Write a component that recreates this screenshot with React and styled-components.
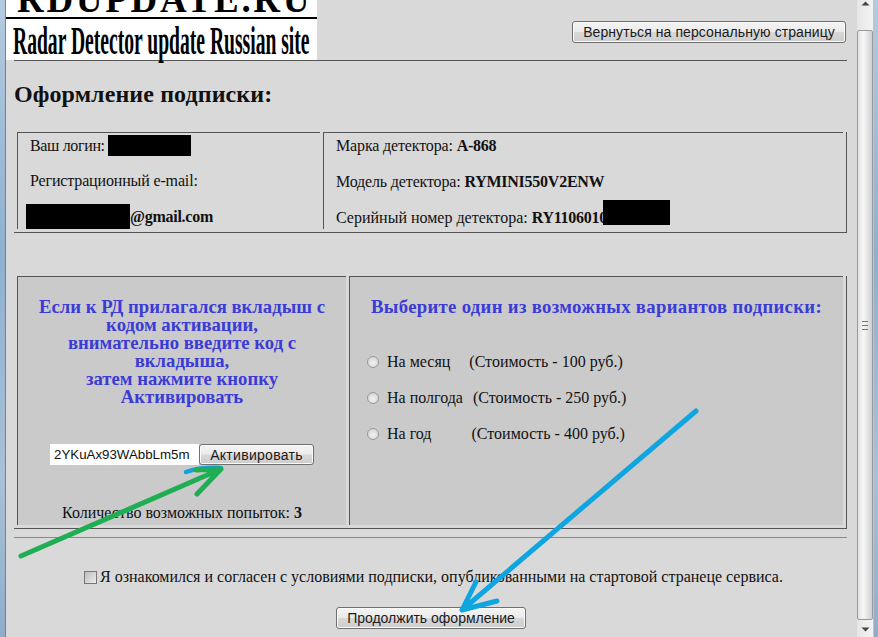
import React from "react";
import styled, { createGlobalStyle } from "styled-components";

const GlobalStyle = createGlobalStyle`
  html, body {
    margin: 0;
    padding: 0;
    overflow: hidden;
    background: #d9d9d9;
  }
`;

const plans = [
  { name: "На месяц", gap: 19, price: "(Стоимость - 100 руб.)" },
  { name: "На полгода", gap: 10, price: "(Стоимость - 250 руб.)" },
  { name: "На год", gap: 40, price: "(Стоимость - 400 руб.)" },
];

export default function App() {
  return (
    <Window>
      <GlobalStyle />
      <WinEdge />
      <Page>
        <Header>
          <Logo>
            <LogoTop>RDUPDATE.RU</LogoTop>
            <LogoBottom>Radar Detector update Russian site</LogoBottom>
          </Logo>
          <BackButton>Вернуться на персональную страницу</BackButton>
        </Header>
        <Rule />
        <Title>Оформление подписки:</Title>

        <InfoTable>
          <InfoLeft>
            <LoginRow>
              Ваш логин:
              <Redact $w={83} $h={21} />
            </LoginRow>
            <MailLabel>Регистрационный e-mail:</MailLabel>
            <MailRow>
              <Redact $w={104} $h={25} />
              <b>@gmail.com</b>
            </MailRow>
          </InfoLeft>
          <InfoRight>
            <InfoLine>
              Марка детектора: <b>A-868</b>
            </InfoLine>
            <InfoLine>
              Модель детектора: <b>RYMINI550V2ENW</b>
            </InfoLine>
            <SerialLine>
              Серийный номер детектора: <b>RY1106010</b>
              <SerialRedact />
            </SerialLine>
          </InfoRight>
        </InfoTable>

        <PanelTable>
          <CodeCell>
            <BlueText>
              Если к РД прилагался вкладыш с
              <br />
              кодом активации,
              <br />
              внимательно введите код с
              <br />
              вкладыша,
              <br />
              затем нажмите кнопку
              <br />
              Активировать
            </BlueText>
            <CodeRow>
              <CodeInput readOnly value="2YKuAx93WAbbLm5m" />
              <ActivateButton>Активировать</ActivateButton>
            </CodeRow>
            <Attempts>
              Количество возможных попыток: <b>3</b>
            </Attempts>
          </CodeCell>
          <PlanCell>
            <BlueText $spacing={0.32}>Выберите один из возможных вариантов подписки:</BlueText>
            <PlanList>
              {plans.map((p) => (
                <PlanRow key={p.name}>
                  <Radio />
                  <span>{p.name}</span>
                  <PlanPrice $gap={p.gap}>{p.price}</PlanPrice>
                </PlanRow>
              ))}
            </PlanList>
          </PlanCell>
        </PanelTable>

        <LowerRule />
        <AgreeRow>
          <Check />
          Я ознакомился и согласен с условиями подписки, опубликованными на стартовой странеце сервиса.
        </AgreeRow>
        <ContinueRow>
          <ContinueButton>Продолжить оформление</ContinueButton>
        </ContinueRow>
      </Page>

      <Scrollbar>
        <ScrollArrow viewBox="0 0 9 5">
          <path d="M0.5 4.5 L4.5 0.5 L8.5 4.5 Z" fill="#444" />
        </ScrollArrow>
        <ScrollThumb>
          <Grip />
        </ScrollThumb>
        <ScrollArrow viewBox="0 0 9 5">
          <path d="M0.5 0.5 L4.5 4.5 L8.5 0.5 Z" fill="#444" />
        </ScrollArrow>
      </Scrollbar>
      <WinEdgeRight />

      <Arrows viewBox="0 0 878 637">
        <g fill="none" strokeLinecap="round" strokeLinejoin="round">
          <path d="M186 472 Q200 467 221 468" stroke="#12a3dc" strokeWidth="4.5" />
          <path d="M21 556 L221 469 M221 469 L197 494 M221 469 L196 470" stroke="#1fae54" strokeWidth="5" />
          <path d="M696 411 L462 610 M462 610 L476 582 M462 610 L497 601" stroke="#0ea5e0" strokeWidth="5" />
        </g>
      </Arrows>
    </Window>
  );
}

const Window = styled.div`
  position: relative;
  display: flex;
  width: 878px;
  height: 637px;
  overflow: hidden;
  background: #d9d9d9;
  font-family: "Liberation Serif", "Times New Roman", serif;
  font-size: 16px;
  color: #111;
`;

const WinEdge = styled.div`
  width: 6px;
  flex: none;
  background: linear-gradient(180deg, #b4cbe0 0%, #8fb0cf 40%, #a9c1d8 75%, #8fadc9 100%);
  border-right: 1px solid #76818c;
  box-sizing: border-box;
`;

const WinEdgeRight = styled(WinEdge)`
  width: 5px;
  border-right: none;
  border-left: 1px solid #b8c4cf;
`;

const Page = styled.div`
  width: 851px;
  flex: none;
  padding-left: 8px;
  box-sizing: border-box;
`;

const Header = styled.div`
  display: flex;
  justify-content: space-between;
  align-items: flex-start;
  height: 60px;
  margin-left: -8px;
  padding-right: 11px;
`;

const Logo = styled.div`
  width: 311px;
  height: 60px;
  background: #fff;
  color: #000;
  display: flex;
  flex-direction: column;
`;

const LogoTop = styled.div`
  flex: none;
  height: 17px;
  border-bottom: 2px solid #000;
  padding-left: 11px;
  font-size: 37px;
  font-weight: 700;
  line-height: 0;
  letter-spacing: 2.7px;
  white-space: nowrap;
  overflow: hidden;
`;

const LogoBottom = styled.div`
  flex: none;
  margin: 3px 0 0 7px;
  font-size: 40px;
  font-weight: 700;
  line-height: 38px;
  white-space: nowrap;
  transform: scaleX(0.49);
  transform-origin: left center;
`;

const btn = `
  font-family: "Liberation Sans", Arial, sans-serif;
  font-size: 14px;
  color: #1a1a1a;
  border: 1px solid #707070;
  border-radius: 3px;
  background: linear-gradient(180deg, #f4f4f4 0%, #ebebeb 48%, #d8d8d8 52%, #cdcdcd 100%);
  box-shadow: inset 0 0 0 1px #fafafa;
  padding: 0;
`;

const BackButton = styled.button`
  ${btn}
  width: 274px;
  height: 22px;
  margin-top: 21px;
  letter-spacing: 0.08px;
`;

const Rule = styled.div`
  height: 1px;
  background: #555;
  margin-right: 10px;
`;

const Title = styled.h2`
  margin: 20px 0 0;
  height: 51px;
  font-size: 24px;
  line-height: 26px;
  font-weight: 700;
  letter-spacing: 0.1px;
`;

const InfoTable = styled.div`
  display: grid;
  grid-template-columns: 309px 1fr;
  grid-template-rows: 97px;
  height: 101px;
  margin-right: 10px;
  border-bottom: 1px solid #555;
  border-right: 1px solid #555;
  box-sizing: border-box;

  b {
    letter-spacing: -0.25px;
  }
`;

const InfoLeft = styled.div`
  margin: 0 3px;
  border-top: 1px solid #555;
  border-left: 1px solid #555;
  box-sizing: border-box;
  letter-spacing: -0.15px;
`;

const InfoRight = styled.div`
  margin-right: 3px;
  border-top: 1px solid #555;
  border-left: 1px solid #555;
  padding-left: 12px;
  box-sizing: border-box;
`;

const LoginRow = styled.div`
  display: flex;
  align-items: center;
  gap: 3px;
  height: 21px;
  margin: 2px 0 0 12px;
  white-space: pre;
  letter-spacing: -0.35px;
`;

const Redact = styled.span`
  display: inline-block;
  flex: none;
  width: ${(p) => p.$w}px;
  height: ${(p) => p.$h}px;
  background: #000;
`;

const MailLabel = styled.div`
  margin: 16px 0 0 12px;
  line-height: 18px;
`;

const MailRow = styled.div`
  display: flex;
  align-items: center;
  height: 25px;
  margin: 14px 0 0 8px;
`;

const InfoLine = styled.div`
  line-height: 18px;
  height: 36px;
  padding-top: 4px;
  box-sizing: border-box;
  white-space: pre;
  letter-spacing: -0.15px;
`;

const SerialLine = styled(InfoLine)`
  position: relative;
  height: 25px;
  letter-spacing: 0;
`;

const SerialRedact = styled.span`
  position: absolute;
  left: 267px;
  top: -5px;
  width: 67px;
  height: 25px;
  background: #000;
`;

const PanelTable = styled.div`
  display: grid;
  grid-template-columns: 329px 1fr;
  grid-template-rows: 249px;
  column-gap: 3px;
  height: 253px;
  margin: 43px 10px 0 0;
  padding: 0 3px 3px;
  border-bottom: 1px solid #555;
  border-right: 1px solid #555;
  box-sizing: border-box;
`;

const Cell = styled.div`
  background: #cacaca;
  border-top: 1px solid #555;
  border-left: 1px solid #555;
  box-sizing: border-box;
  min-width: 0;
`;

const CodeCell = styled(Cell)`
  padding-top: 21px;
  text-align: center;
  display: flex;
  flex-direction: column;
  align-items: center;
`;

const PlanCell = styled(Cell)`
  padding-top: 21px;
  text-align: center;
`;

const BlueText = styled.div`
  color: #3b3bd6;
  font-size: 18.72px;
  font-weight: 700;
  line-height: 18px;
  white-space: nowrap;
  letter-spacing: ${(p) => p.$spacing || 0}px;
`;

const CodeRow = styled.div`
  display: flex;
  align-items: center;
  margin-top: 38px;
`;

const CodeInput = styled.input`
  width: 149px;
  height: 21px;
  border: none;
  padding: 0 0 0 4px;
  box-sizing: border-box;
  background: #fff;
  color: #111;
  font-family: "Liberation Sans", Arial, sans-serif;
  font-size: 13.3px;
  outline: none;
`;

const ActivateButton = styled.button`
  ${btn}
  width: 115px;
  height: 21px;
  letter-spacing: 0.3px;
`;

const Attempts = styled.div`
  margin-top: 39px;
  line-height: 18px;
  white-space: pre;
`;

const PlanList = styled.div`
  margin-top: 37px;
  padding-left: 17px;
  display: flex;
  flex-direction: column;
  gap: 18px;
`;

const PlanRow = styled.div`
  display: flex;
  align-items: center;
  height: 18px;
  white-space: pre;
`;

const PlanPrice = styled.span`
  margin-left: ${(p) => p.$gap}px;
`;

const Radio = styled.span`
  width: 12px;
  height: 12px;
  margin-right: 8px;
  border-radius: 50%;
  border: 1px solid #9a9a9a;
  box-sizing: border-box;
  background: radial-gradient(circle at 50% 60%, #f2f2f2 0%, #dcdcdc 60%, #c4c4c4 100%);
`;

const LowerRule = styled.div`
  height: 1px;
  background: #8a8a8a;
  margin: 8px 10px 0 0;
`;

const AgreeRow = styled.div`
  display: flex;
  align-items: center;
  justify-content: center;
  height: 18px;
  margin: 30px 4px 0 0;
  white-space: pre;
`;

const Check = styled.span`
  width: 13px;
  height: 13px;
  margin-right: 3px;
  border: 1px solid #777;
  box-sizing: border-box;
  background: linear-gradient(135deg, #bdbdbd, #ececec);
`;

const ContinueRow = styled.div`
  display: flex;
  justify-content: center;
  margin: 21px 9px 0 0;
`;

const ContinueButton = styled.button`
  ${btn}
  width: 190px;
  height: 22px;
`;

const Scrollbar = styled.div`
  width: 16px;
  flex: none;
  background: linear-gradient(90deg, #e6e6e6, #f4f4f4);
  display: flex;
  flex-direction: column;
  align-items: center;
  height: 637px;
  box-sizing: border-box;
  padding: 1px 0 5px;
`;

const ScrollArrow = styled.svg`
  width: 9px;
  height: 5px;
  flex: none;
`;

const ScrollThumb = styled.div`
  flex: 1;
  width: 100%;
  margin: 24px 0 7px;
  border: 1px solid #9a9a9a;
  border-radius: 2px;
  box-sizing: border-box;
  background: linear-gradient(90deg, #e2e2e2, #f7f7f7 40%, #cfcfcf);
  display: flex;
  align-items: center;
  justify-content: center;
`;

const Grip = styled.div`
  width: 6px;
  height: 7px;
  border-top: 1px solid #777;
  border-bottom: 1px solid #777;
  background: linear-gradient(#777, #777) center / 100% 1px no-repeat;
`;

const Arrows = styled.svg`
  position: absolute;
  left: 0;
  top: 0;
  width: 878px;
  height: 637px;
  pointer-events: none;
`;
